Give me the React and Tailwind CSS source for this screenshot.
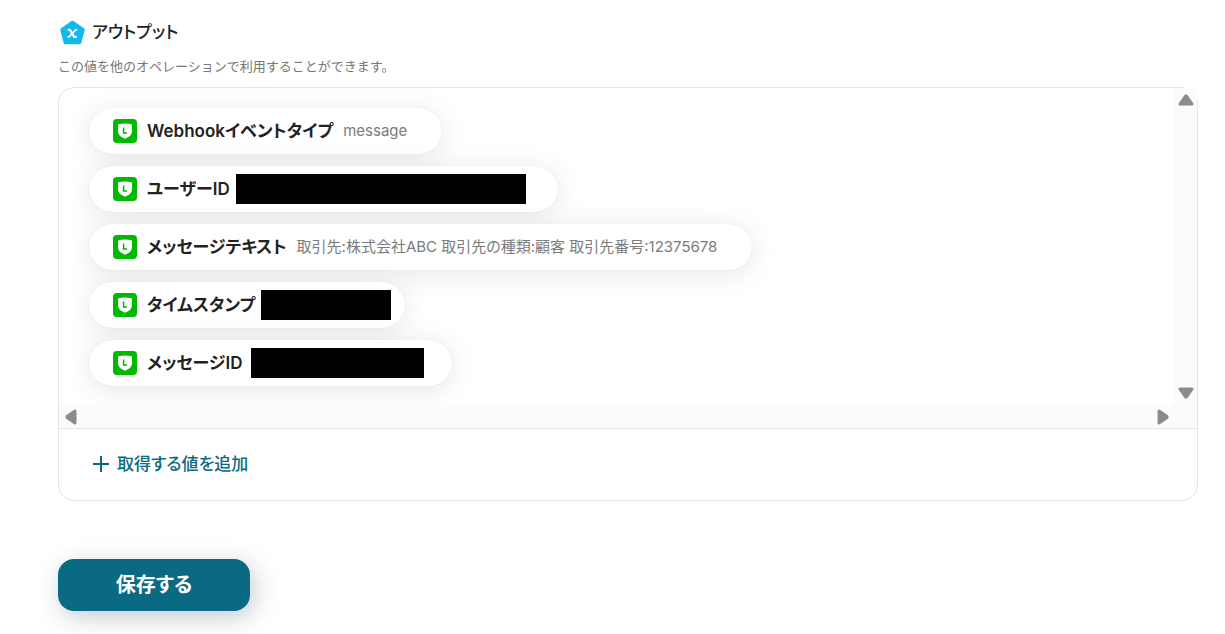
const outputs = [
    { id: 'event-type', label: 'Webhookイベントタイプ', value: 'message', spacing: 'gap-[10px] pr-[35px]' },
    { id: 'user-id', label: 'ユーザーID', masked: 'w-[290px]', spacing: 'gap-[6px] pr-8' },
    { id: 'message-text', label: 'メッセージテキスト', value: '取引先:株式会社ABC 取引先の種類:顧客 取引先番号:12375678', spacing: 'gap-[10px] pr-[35px]' },
    { id: 'timestamp', label: 'タイムスタンプ', masked: 'w-[130px]', spacing: 'gap-[6px] pr-[14px]' },
    { id: 'message-id', label: 'メッセージID', masked: 'w-[173px]', spacing: 'gap-2 pr-7' },
];

function OutputIcon() {
    return (
        <svg className="h-[25px] w-[25px]" viewBox="0 0 24 24" aria-hidden="true">
            <path
                d="M12 2.400 22 9.300 18.800 21.600H5.200L2 9.300Z"
                fill="#12b9ee"
                stroke="#12b9ee"
                strokeWidth="3.400"
                strokeLinejoin="round"
            />
            <path
                d="M8.200 9.400H9.600L13.600 16.200H15.200"
                fill="none"
                stroke="#fff"
                strokeWidth="2"
                strokeLinecap="round"
                strokeLinejoin="round"
            />
            <path
                d="M16 9.400H15.200L8.600 16.200H7.800"
                fill="none"
                stroke="#fff"
                strokeWidth="1.600"
                strokeLinecap="round"
                strokeLinejoin="round"
            />
        </svg>
    );
}

function LineIcon() {
    return (
        <svg className="h-6 w-6 shrink-0" viewBox="0 0 24 24" aria-hidden="true">
            <rect width="24" height="24" rx="4" fill="#00b900" />
            <path
                d="M5 5.600Q12 3.400 19 5.600V12c0 3.600-2.600 6.200-7 7.700C7.600 18.200 5 15.600 5 12Z"
                fill="#fff"
            />
            <path d="M10.600 8.400v5.700h3.500" fill="none" stroke="#00b900" strokeWidth="1.500" />
        </svg>
    );
}

const arrowPaths = {
    up: 'M7.500 4h1L14 12H2Z',
    down: 'M7.500 12h1L14 4H2Z',
    left: 'M4 7.500v1L12 14V2Z',
    right: 'M12 7.500v1L4 14V2Z',
};

function ScrollButton({ direction, label }) {
    return (
        <button type="button" aria-label={label} className="flex h-6 w-[23px] items-center justify-center">
            <svg className="h-4 w-4" viewBox="0 0 16 16" aria-hidden="true">
                <path
                    d={arrowPaths[direction]}
                    fill="#8b8b8b"
                    stroke="#8b8b8b"
                    strokeWidth="3"
                    strokeLinejoin="round"
                />
            </svg>
        </button>
    );
}

function OutputPill({ item }) {
    return (
        <li
            className={`flex h-[46px] items-center rounded-full bg-white pl-6 shadow-[0_4px_28px_rgba(0,0,0,0.1),0_0_1px_rgba(0,0,0,0.12)] ${item.spacing}`}
        >
            <span className="flex items-center gap-[10px]">
                <LineIcon />
                <span className="text-[17px] leading-[26px] font-semibold whitespace-nowrap">{item.label}</span>
            </span>
            {item.masked ? (
                <span className={`h-[30px] bg-black ${item.masked}`} />
            ) : (
                <span className="text-[15px] leading-6 whitespace-nowrap text-[#7b7b7b]">{item.value}</span>
            )}
        </li>
    );
}

export default function App() {
    return (
        <main className="pt-5 pr-[27px] pb-6 pl-[58px] font-['Inter','Noto_Sans_CJK_JP',sans-serif] text-[#222] [font-feature-settings:'palt']">
            <h2 className="flex h-6 items-center gap-[7px] pl-[2px] text-[17px] leading-[26px] font-medium">
                <OutputIcon />
                アウトプット
            </h2>
            <p className="mt-3 text-[13px] leading-5 text-[#777] [font-feature-settings:normal]">
                この値を他のオペレーションで利用することができます。
            </p>

            <section className="mt-[11px] rounded-2xl border border-[#e4e4e4]">
                <div className="grid grid-cols-[1fr_23px] border-b border-[#e4e4e4]">
                    <ul className="flex flex-col items-start gap-3 overflow-hidden pt-5 pb-[19px] pl-[30px]">
                        {outputs.map(item => (
                            <OutputPill key={item.id} item={item} />
                        ))}
                    </ul>
                    <div className="flex flex-col justify-between bg-[#fbfbfb]">
                        <ScrollButton direction="up" label="上へスクロール" />
                        <ScrollButton direction="down" label="下へスクロール" />
                    </div>
                    <div className="flex h-[23px] items-center justify-between bg-[#fbfbfb]">
                        <ScrollButton direction="left" label="左へスクロール" />
                        <ScrollButton direction="right" label="右へスクロール" />
                    </div>
                    <div className="bg-[#fbfbfb]" />
                </div>
                <div className="flex h-[71px] items-center pb-[2px] pl-[34px]">
                    <button type="button" className="flex items-center gap-2 text-[17px] leading-[26px] font-medium text-[#0b6a83]">
                        <svg className="h-4 w-4" viewBox="0 0 16 16" aria-hidden="true">
                            <path d="M8 0v16M0 8h16" stroke="currentColor" strokeWidth="2" />
                        </svg>
                        取得する値を追加
                    </button>
                </div>
            </section>

            <button
                type="button"
                className="mt-[58px] flex h-[52px] w-48 items-center justify-center rounded-2xl bg-[#0b6a83] text-xl font-bold text-white shadow-[4px_6px_24px_rgba(20,50,80,0.25)]"
            >
                保存する
            </button>
        </main>
    );
}
